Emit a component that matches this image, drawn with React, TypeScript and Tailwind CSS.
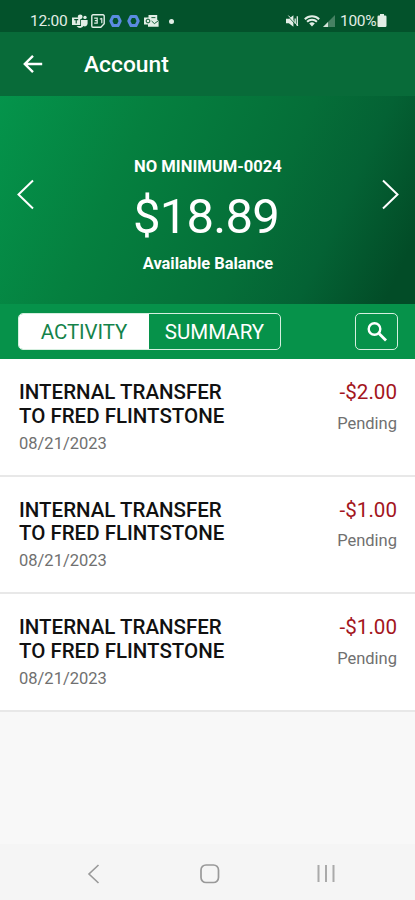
import { useState } from "react";

type Transaction = { id: number; lines: string[]; date: string; amount: string; status: string };

const transactions: Transaction[] = [
  { id: 1, lines: ["INTERNAL TRANSFER", "TO FRED FLINTSTONE"], date: "08/21/2023", amount: "-$2.00", status: "Pending" },
  { id: 2, lines: ["INTERNAL TRANSFER", "TO FRED FLINTSTONE"], date: "08/21/2023", amount: "-$1.00", status: "Pending" },
  { id: 3, lines: ["INTERNAL TRANSFER", "TO FRED FLINTSTONE"], date: "08/21/2023", amount: "-$1.00", status: "Pending" },
];

function HexPlay() {
  return (
    <svg width="13" height="14" viewBox="0 0 13 14" fill="none">
      <path d="M4 2.4h5l2.2 4.6L9 11.6H4L1.8 7z" stroke="#5b8be0" strokeWidth="3" strokeLinejoin="round" />
      <path d="M5 4.4 9 7 5 9.6z" fill="#03522b" />
    </svg>
  );
}

function StatusBar() {
  return (
    <div className="flex h-8 items-center bg-[#03522b] pt-[10px] pr-[28px] pl-[30px] text-[#e2eee6]">
      <span className="mt-[2px] w-[42px] text-[15.5px] leading-none tracking-[-0.2px] whitespace-nowrap">12:00</span>
      {/* notification icons */}
      <svg width="16" height="14" viewBox="0 0 16 14" fill="currentColor">
        <circle cx="8.2" cy="2.8" r="2.4" />
        <circle cx="13" cy="3.4" r="1.7" />
        <path d="M0 3.6h8.2V11H0zM9 6h6.6v3.6a2.8 2.8 0 0 1-4 2.5A4.2 4.2 0 0 1 4.6 12H9z" />
        <path d="M2.2 5.6h4M4.2 5.6V9.4" stroke="#03522b" strokeWidth="1.1" />
      </svg>
      <svg className="ml-[3px]" width="14" height="14" viewBox="0 0 14 14" fill="none" stroke="currentColor">
        <path d="M2 .8h10a1.2 1.2 0 0 1 1.2 1.2v7.8l-3.4 3.4H2A1.2 1.2 0 0 1 .8 12V2A1.2 1.2 0 0 1 2 .8z" strokeWidth="1.4" />
        <path d="M3.2 4.2h3v5h-3M3.8 6.7H6M10.800 4.200v5M8.800 5.200l2-1" strokeWidth="1.2" />
      </svg>
      <div className="ml-[4px] flex gap-[5px]">
        <HexPlay />
        <HexPlay />
      </div>
      <svg className="ml-[4px]" width="15" height="12" viewBox="0 0 15 12" fill="currentColor">
        <path d="M4.5 0h8.7v4.4L14.6 6v5.8H4V9.6H0V2.4h4.5z" />
        <circle cx="4" cy="6" r="1.9" fill="none" stroke="#03522b" strokeWidth="1" />
        <path d="m7.6 6 2.8 2.6L14 6M7.4 2.6h4" fill="none" stroke="#03522b" strokeWidth=".9" />
      </svg>
      <span className="ml-[10px] size-[5px] rounded-full bg-[#e2eee6]" />

      <div className="ml-auto flex items-center">
        <svg width="13" height="12" viewBox="0 0 13 12" fill="currentColor">
          <path d="M0 3.7h2.8L7.4.3v11.4L2.8 8.3H0z" />
          <path d="m1.6 1 9.8 10.2" stroke="#03522b" strokeWidth="1" />
          <path d="m2.4.6 9.4 10" stroke="currentColor" strokeWidth="1" />
          <path d="M9.2 3.4v5M11.3 1.2v9.8" stroke="currentColor" strokeWidth="1.3" />
        </svg>
        <svg className="ml-[5px]" width="16" height="12" viewBox="0 0 16 12" fill="none" stroke="currentColor">
          <path d="M.8 4.2a10.5 10.5 0 0 1 14.4 0M3.1 6.7a7 7 0 0 1 9.8 0" strokeWidth="2" />
          <path d="M5.2 8.4a4.2 4.2 0 0 1 5.6 0L8 11.6z" fill="currentColor" stroke="none" />
        </svg>
        <svg className="ml-[3px]" width="12" height="12" viewBox="0 0 12 12" fill="currentColor">
          <path d="M12 0v12H0z" opacity=".3" />
          <path d="M5 7v5H0z" opacity=".9" />
        </svg>
        <span className="mt-[2px] ml-[5px] w-[37px] text-[15.5px] leading-none tracking-[-0.3px] whitespace-nowrap">100%</span>
        <svg className="-mt-[1px]" width="10" height="13" viewBox="0 0 10 13" fill="currentColor">
          <path d="M3 0h4v1.6h1.3a1.2 1.2 0 0 1 1.2 1.2v9A1.2 1.2 0 0 1 8.3 13H1.7A1.2 1.2 0 0 1 .5 11.8v-9a1.2 1.2 0 0 1 1.2-1.2H3z" />
        </svg>
      </div>
    </div>
  );
}

function AppBar() {
  return (
    <header className="flex h-16 items-center bg-[#086b39] pl-[23px] text-white">
      <button aria-label="Back">
        <svg width="20" height="20" viewBox="0 0 20 20" fill="none" stroke="currentColor" strokeWidth="2.4">
          <path d="M19.2 10H2.4M10 1.8 1.8 10 10 18.2" />
        </svg>
      </button>
      <h1 className="mt-[3px] ml-[41px] text-[22.8px] leading-none font-medium">Account</h1>
    </header>
  );
}

function BalanceCard() {
  return (
    <section className="flex h-[208px] items-start justify-between bg-[linear-gradient(115deg,#04944b_0%,#05803f_30%,#056e38_62%,#046234_77%,#024c27_94%)] pr-[15px] pl-[16px] text-white">
      <button aria-label="Previous account" className="mt-[83px]">
        <svg width="19" height="31" viewBox="0 0 19 31" fill="none" stroke="currentColor" strokeWidth="2">
          <path d="M17 1.5 2.5 15.5 17 29.5" />
        </svg>
      </button>
      <div className="flex flex-col items-center whitespace-nowrap">
        <div className="mt-[61px] text-[16.6px] leading-5 font-bold">NO MINIMUM-0024</div>
        <div className="mt-[13px] mr-[4px] text-[49px] leading-[54px] tracking-[-0.8px]">$18.89</div>
        <div className="mt-[10px] text-[16.4px] leading-5 font-bold">Available Balance</div>
      </div>
      <button aria-label="Next account" className="mt-[83px]">
        <svg width="19" height="31" viewBox="0 0 19 31" fill="none" stroke="currentColor" strokeWidth="2">
          <path d="M2 1.5 16.5 15.5 2 29.5" />
        </svg>
      </button>
    </section>
  );
}

function Toolbar() {
  const [tab, setTab] = useState<"activity" | "summary">("activity");
  const active = "bg-white text-[#14834a]";
  return (
    <div className="flex h-[55px] items-start justify-between bg-[#06924a] pt-[9px] pr-[17px] pl-[18px] text-white">
      <div className="flex h-[37px] w-[263px] overflow-hidden rounded-[5px] border-[1.5px] border-[#d5efdf] text-[20.5px] leading-none">
        <button className={`w-[130px] pt-[2px] tracking-[-0.1px] ${tab === "activity" ? active : ""}`} onClick={() => setTab("activity")}>ACTIVITY</button>
        <button className={`flex-1 pt-[2px] ${tab === "summary" ? active : ""}`} onClick={() => setTab("summary")}>SUMMARY</button>
      </div>
      <button aria-label="Search" className="flex h-[37px] w-[43px] items-center justify-center rounded-[5px] border-[1.5px] border-[#d5efdf]">
        <svg width="20" height="20" viewBox="0 0 20 20" fill="none" stroke="currentColor" strokeWidth="2.4">
          <circle cx="7.5" cy="7" r="5.8" />
          <path d="m12 11.5 7 7" strokeWidth="2.8" />
        </svg>
      </button>
    </div>
  );
}

function TransactionRow({ tx }: { tx: Transaction }) {
  return (
    <li className="flex h-[117.5px] justify-between border-b-2 border-[#e8e8e8] bg-white pt-[22px] pr-[18px] pl-[19px] whitespace-nowrap">
      <div>
        <div className="text-[20.5px] leading-[23.5px] font-medium text-[#111]">
          {tx.lines.map((line) => (
            <div key={line}>{line}</div>
          ))}
        </div>
        <div className="mt-[5.5px] text-[16.5px] leading-5 text-[#707070]">{tx.date}</div>
      </div>
      <div className="text-right">
        <div className="text-[20.6px] leading-[23px] text-[#a3151d]">{tx.amount}</div>
        <div className="mt-[9.5px] text-[16.5px] leading-5 text-[#707070]">{tx.status}</div>
      </div>
    </li>
  );
}

function NavBar() {
  return (
    <nav className="flex h-14 items-center bg-[#f5f5f5] pt-[3px] pl-[87px] text-[#999]">
      <svg width="13" height="20" viewBox="0 0 13 20" fill="none" stroke="currentColor" strokeWidth="1.6">
        <path d="M11.5 1 2 10l9.5 9" />
      </svg>
      <svg className="ml-[100px]" width="20" height="20" viewBox="0 0 20 20" fill="none" stroke="currentColor" strokeWidth="1.7">
        <rect x="1" y="1" width="17.5" height="17.5" rx="5" />
      </svg>
      <svg className="ml-[96px]" width="20" height="18" viewBox="0 0 20 18" fill="none" stroke="#aaa" strokeWidth="2">
        <path d="M2.5 0v17M10 0v17M17.5 0v17" />
      </svg>
    </nav>
  );
}

export default function App() {
  return (
    <div className="flex h-[900px] w-[415px] flex-col overflow-hidden bg-[#f8f8f8] font-['Roboto',sans-serif]">
      <StatusBar />
      <AppBar />
      <BalanceCard />
      <Toolbar />
      <ul className="flex-1">
        {transactions.map((tx) => (
          <TransactionRow key={tx.id} tx={tx} />
        ))}
      </ul>
      <NavBar />
    </div>
  );
}
